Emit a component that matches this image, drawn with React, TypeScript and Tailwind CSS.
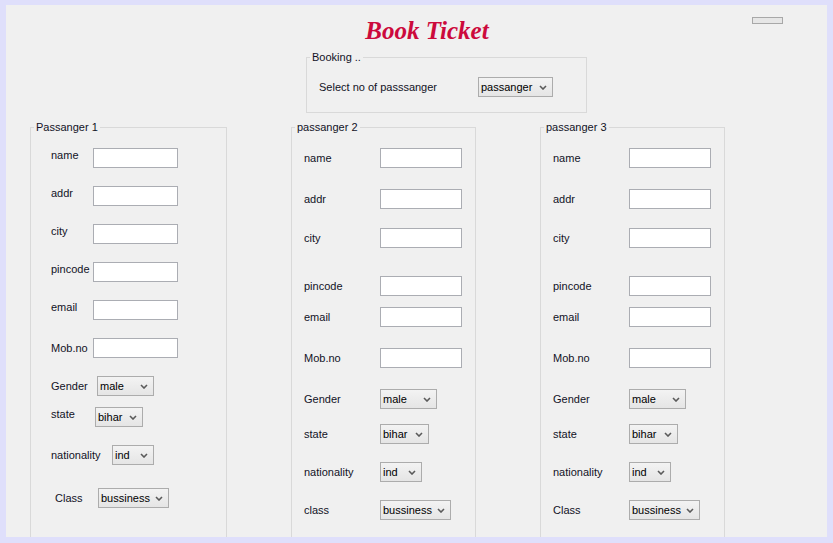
import type { ReactNode } from 'react';

type Row = {
  label: string;
  kind: 'text' | 'combo';
  value?: string;
  rowCls: string;
  labelCls: string;
  ctrlCls: string;
};

const P1: Row[] = [
  { label: 'name', kind: 'text', rowCls: 'mt-[14px]', labelCls: 'w-[42px] pt-0', ctrlCls: 'w-[85px]' },
  { label: 'addr', kind: 'text', rowCls: 'mt-[18px]', labelCls: 'w-[42px] pt-0', ctrlCls: 'w-[85px]' },
  { label: 'city', kind: 'text', rowCls: 'mt-[18px]', labelCls: 'w-[42px] pt-0', ctrlCls: 'w-[85px]' },
  { label: 'pincode', kind: 'text', rowCls: 'mt-[18px]', labelCls: 'w-[42px] pt-0', ctrlCls: 'w-[85px]' },
  { label: 'email', kind: 'text', rowCls: 'mt-[18px]', labelCls: 'w-[42px] pt-0', ctrlCls: 'w-[85px]' },
  { label: 'Mob.no', kind: 'text', rowCls: 'mt-[18px]', labelCls: 'w-[42px] pt-[3px]', ctrlCls: 'w-[85px]' },
  { label: 'Gender', kind: 'combo', value: 'male', rowCls: 'mt-[18px]', labelCls: 'w-[46px] pt-[3px]', ctrlCls: 'w-[57px]' },
  { label: 'state', kind: 'combo', value: 'bihar', rowCls: 'mt-[11px]', labelCls: 'w-[44px] pt-0', ctrlCls: 'w-[48px]' },
  { label: 'nationality', kind: 'combo', value: 'ind', rowCls: 'mt-[18px]', labelCls: 'w-[61px] pt-[3px]', ctrlCls: 'w-[42px]' },
  { label: 'Class', kind: 'combo', value: 'bussiness', rowCls: 'mt-[23px]', labelCls: 'w-[47px] pl-[4px] pt-[3px]', ctrlCls: 'w-[71px]' },
];

function otherRows(classLabel: string): Row[] {
  const lbl = 'w-[76px] pt-[3px]';
  return [
    { label: 'name', kind: 'text', rowCls: 'mt-[14px]', labelCls: lbl, ctrlCls: 'w-[82px]' },
    { label: 'addr', kind: 'text', rowCls: 'mt-[21px]', labelCls: lbl, ctrlCls: 'w-[82px]' },
    { label: 'city', kind: 'text', rowCls: 'mt-[19px]', labelCls: lbl, ctrlCls: 'w-[82px]' },
    { label: 'pincode', kind: 'text', rowCls: 'mt-[28px]', labelCls: lbl, ctrlCls: 'w-[82px]' },
    { label: 'email', kind: 'text', rowCls: 'mt-[11px]', labelCls: lbl, ctrlCls: 'w-[82px]' },
    { label: 'Mob.no', kind: 'text', rowCls: 'mt-[21px]', labelCls: lbl, ctrlCls: 'w-[82px]' },
    { label: 'Gender', kind: 'combo', value: 'male', rowCls: 'mt-[21px]', labelCls: lbl, ctrlCls: 'w-[57px]' },
    { label: 'state', kind: 'combo', value: 'bihar', rowCls: 'mt-[15px]', labelCls: lbl, ctrlCls: 'w-[49px]' },
    { label: 'nationality', kind: 'combo', value: 'ind', rowCls: 'mt-[18px]', labelCls: lbl, ctrlCls: 'w-[42px]' },
    { label: classLabel, kind: 'combo', value: 'bussiness', rowCls: 'mt-[18px]', labelCls: lbl, ctrlCls: 'w-[71px]' },
  ];
}

function Chevron() {
  return (
    <svg width="8" height="5" viewBox="0 0 8 5" className="shrink-0">
      <polyline points="1,1 4,4 7,1" fill="none" stroke="#5a5a5a" strokeWidth="1.6" />
    </svg>
  );
}

function Combo({ value, className }: { value: string; className: string }) {
  return (
    <div
      className={`${className} h-[20px] flex items-center justify-between pl-[2px] pr-[5px] border border-[#acacac] bg-gradient-to-b from-[#f3f3f3] to-[#e5e5e5] text-black`}
    >
      <span className="leading-[14px]">{value}</span>
      <Chevron />
    </div>
  );
}

function TextField({ className }: { className: string }) {
  return <div className={`${className} h-[20px] bg-white border border-[#abadb3]`} />;
}

function GroupBox({ title, className, children }: { title: string; className: string; children: ReactNode }) {
  return (
    <fieldset className={`${className} border border-[#d9d9d9] p-0 m-0`}>
      <legend className="ml-[3px] px-[2px] leading-[14px]">{title}</legend>
      {children}
    </fieldset>
  );
}

function Panel({ title, rows, className, padCls }: { title: string; rows: Row[]; className: string; padCls: string }) {
  return (
    <GroupBox title={title} className={`${className} h-[440px] shrink-0`}>
      <div className={`${padCls} flex flex-col`}>
        {rows.map((r) => (
          <div key={r.label} className={`${r.rowCls} flex items-start`}>
            <span className={`${r.labelCls} shrink-0 leading-[14px] whitespace-nowrap`}>{r.label}</span>
            {r.kind === 'text' ? <TextField className={r.ctrlCls} /> : <Combo value={r.value ?? ''} className={r.ctrlCls} />}
          </div>
        ))}
      </div>
    </GroupBox>
  );
}

export default function App() {
  return (
    <div className="w-[833px] h-[543px] bg-[#dfdffb] pt-[5px] pl-[6px] pr-[6px] pb-[6px] font-['Liberation_Sans',Arial,sans-serif] text-[11px] text-[#121226]">
      <div className="relative h-full bg-[#f0f0f0] overflow-hidden">
        <div className="absolute left-[746px] top-[12px] w-[31px] h-[7px] border border-[#a8a8a8] bg-[#e6e6e6]" />

        <h1 className="mt-[11px] h-[30px] leading-[30px] text-center text-[25px] font-bold italic text-[#cc0a3c] font-['Liberation_Serif','Times_New_Roman',serif] pl-[21px]">
          Book Ticket
        </h1>

        <GroupBox title="Booking .." className="ml-[300px] mt-[4px] w-[281px]">
          <div className="flex items-center pl-[12px] pt-[13px] pb-[15px]">
            <span className="w-[159px] shrink-0 leading-[14px]">Select no of passsanger</span>
            <Combo value="passanger" className="w-[75px]" />
          </div>
        </GroupBox>

        <div className="flex gap-[64px] ml-[24px] mt-[7px]">
          <Panel title="Passanger 1" rows={P1} className="w-[197px]" padCls="pl-[20px]" />
          <Panel title="passanger 2" rows={otherRows('class')} className="w-[185px]" padCls="pl-[12px]" />
          <Panel title="passanger 3" rows={otherRows('Class')} className="w-[185px]" padCls="pl-[12px]" />
        </div>
      </div>
    </div>
  );
}
